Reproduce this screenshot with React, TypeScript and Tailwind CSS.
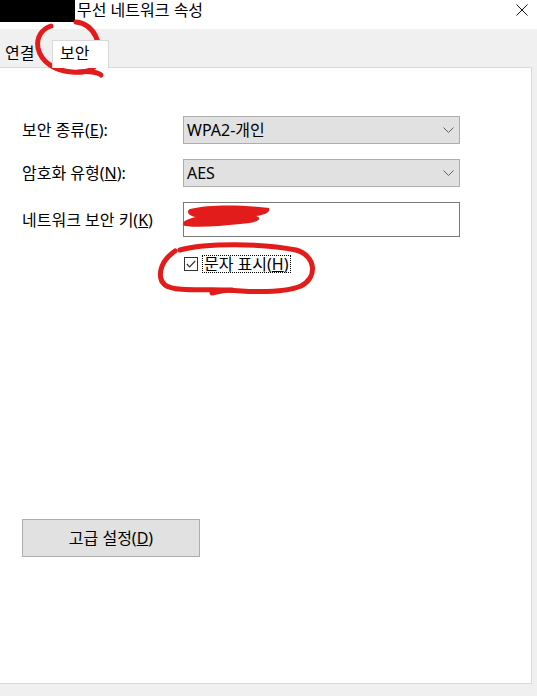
import React from "react";

const font = { fontFamily: '"Segoe UI", "Noto Sans", "Noto Sans CJK KR", sans-serif' };

function Chevron() {
  return (
    <svg width="11" height="6" viewBox="0 0 11 6" className="shrink-0">
      <path d="M0.5 0.5 L5.5 5.5 L10.5 0.5" fill="none" stroke="#606060" strokeWidth="1" />
    </svg>
  );
}

function Select({ value }: { value: string }) {
  return (
    <div className="w-[277px] h-[28px] bg-[#e1e1e1] border border-[#adadad] flex items-center justify-between pl-[3px] pr-[5px] text-[16px] text-black">
      <span>{value}</span>
      <Chevron />
    </div>
  );
}

function Row({ label, children }: { label: React.ReactNode; children: React.ReactNode }) {
  return (
    <div className="flex items-center">
      <div className="w-[161px] text-[16px] text-black">{label}</div>
      {children}
    </div>
  );
}

export default function App() {
  return (
    <div className="relative w-[537px] h-[696px] bg-[#f0f0f0] overflow-hidden flex flex-col" style={font}>
      {/* title bar */}
      <div className="h-[29px] bg-white flex items-start shrink-0">
        <div className="w-[75px] h-[22px] bg-black" />
        <div className="ml-[2px] text-[16px] leading-[21px] text-black">무선 네트워크 속성</div>
        <svg width="12" height="12" viewBox="0 0 12 12" className="ml-auto mr-[9px] mt-[4px]">
          <path d="M0.5 0.5 L11.5 11.5 M11.5 0.5 L0.5 11.5" stroke="#111" strokeWidth="1" />
        </svg>
      </div>

      {/* tabs */}
      <div className="h-[38px] flex items-end shrink-0">
        <div className="w-[52px] h-[25px] pl-[5px] text-[16px] leading-[22px] text-black">연결</div>
        <div className="w-[57px] h-[28px] bg-white border border-b-0 border-[#d9d9d9] text-[16px] leading-[24px] pl-[7px] text-black relative z-10 -mb-px">
          보안
        </div>
      </div>

      {/* panel */}
      <div className="w-[532px] h-[617px] bg-white border border-l-0 border-[#d9d9d9] flex flex-col pl-[22px] pt-[48px]">
        <div className="flex flex-col gap-[15px]">
          <Row label={<>보안 종류(<span className="underline">E</span>):</>}>
            <Select value="WPA2-개인" />
          </Row>
          <Row label={<>암호화 유형(<span className="underline">N</span>):</>}>
            <Select value="AES" />
          </Row>
          <Row label={<>네트워크 보안 키(<span className="underline">K</span>)</>}>
            <div className="w-[277px] h-[35px] bg-white border border-[#7a7a7a]" />
          </Row>
        </div>

        <div className="flex items-center ml-[162px] mt-[18px]">
          <div className="w-[14px] h-[14px] border border-[#333] bg-white flex items-center justify-center">
            <svg width="10" height="8" viewBox="0 0 10 8">
              <path d="M0.8 4 L3.6 6.8 L9.2 1" fill="none" stroke="#333" strokeWidth="1.2" />
            </svg>
          </div>
          <div className="ml-[4px] h-[18px] px-[1px] border border-dotted border-black text-[16px] leading-[16px] text-black">
            문자 표시(<span className="underline">H</span>)
          </div>
        </div>

        <div className="mt-[246px] w-[178px] h-[38px] bg-[#e1e1e1] border border-[#adadad] flex items-center justify-center text-[16px] text-black">
          고급 설정(<span className="underline">D</span>)
        </div>
      </div>

      {/* red annotations */}
      <svg className="absolute inset-0 pointer-events-none" width="537" height="696" viewBox="0 0 537 696">
        <g fill="none" stroke="#e21b1b" strokeWidth="5" strokeLinecap="round" strokeLinejoin="round">
          <path d="M76 22 C 95 24, 102 45, 98 60 C 95 71, 85 73, 72 72 C 55 71, 41 62, 38 48 C 36 37, 42 29, 51 26" />
          <path d="M79 72 C 88 71, 98 72, 101 75" />
          <path d="M180 250 C 205 243, 262 243, 296 250 C 316 256, 318 277, 301 286 C 285 293, 250 292, 225 290 C 205 289, 174 292, 165 285 C 157 278, 159 262, 175 251" />
          <path d="M212 293 C 220 291, 228 290, 232 290" />
        </g>
        <g fill="#e21b1b">
          <path d="M190 209 C 210 204, 245 205, 269 208 C 271 213, 263 215, 256 216 C 263 218, 259 223, 240 224 C 220 226, 200 228, 185 226 C 179 222, 188 219, 196 217 C 188 216, 186 211, 190 209 Z" />
        </g>
      </svg>
    </div>
  );
}
